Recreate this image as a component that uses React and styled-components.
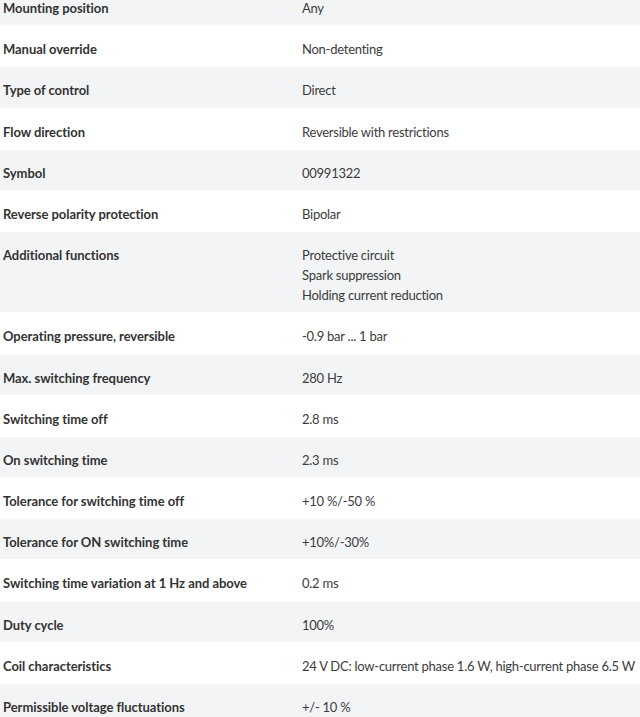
import React from 'react';
import styled, { createGlobalStyle } from 'styled-components';

const GlobalStyle = createGlobalStyle`
  html, body {
    margin: 0;
    padding: 0;
    background: #fff;
  }
  body {
    font-family: Lato, "Open Sans", sans-serif;
    color: #333;
    overflow: hidden;
  }
`;

const SpecTable = styled.div`
  margin-top: -16px;
  width: 640px;
`;

const Row = styled.div`
  display: grid;
  grid-template-columns: 299px 1fr;
  border-top: 1px solid #fff;
  padding: 13px 0 7.2px;
  background: ${(p) => (p.shaded ? '#f3f4f5' : '#fff')};
  background-clip: padding-box;
`;

const Label = styled.div`
  padding-left: 3px;
  font-size: 13px;
  line-height: 20px;
  font-weight: 700;
  letter-spacing: -0.05px;
  color: #333;
`;

const Value = styled.div`
  padding-left: 3px;
  font-size: 13px;
  line-height: 20px;
  letter-spacing: -0.25px;
  color: #3c3c3c;
  white-space: nowrap;
`;

const Line = styled.span`
  display: block;
`;

const specs = [
  ['Mounting position', ['Any']],
  ['Manual override', ['Non-detenting']],
  ['Type of control', ['Direct']],
  ['Flow direction', ['Reversible with restrictions']],
  ['Symbol', ['00991322']],
  ['Reverse polarity protection', ['Bipolar']],
  ['Additional functions', ['Protective circuit', 'Spark suppression', 'Holding current reduction']],
  ['Operating pressure, reversible', ['-0.9 bar ... 1 bar']],
  ['Max. switching frequency', ['280 Hz']],
  ['Switching time off', ['2.8 ms']],
  ['On switching time', ['2.3 ms']],
  ['Tolerance for switching time off', ['+10 %/-50 %']],
  ['Tolerance for ON switching time', ['+10%/-30%']],
  ['Switching time variation at 1 Hz and above', ['0.2 ms']],
  ['Duty cycle', ['100%']],
  ['Coil characteristics', ['24 V DC: low-current phase 1.6 W, high-current phase 6.5 W']],
  ['Permissible voltage fluctuations', ['+/- 10 %']],
];

export default function App() {
  return (
    <>
      <GlobalStyle />
      <SpecTable>
        {specs.map(([label, values], i) => (
          <Row key={label} shaded={i % 2 === 0}>
            <Label>{label}</Label>
            <Value>
              {values.map((v) => (
                <Line key={v}>{v}</Line>
              ))}
            </Value>
          </Row>
        ))}
      </SpecTable>
    </>
  );
}
